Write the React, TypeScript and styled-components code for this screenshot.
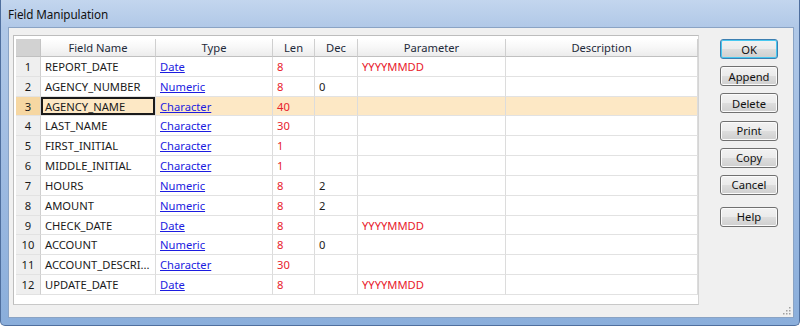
import React from "react";
import styled, { createGlobalStyle, css } from "styled-components";

const GlobalStyle = createGlobalStyle`
  html, body { margin: 0; padding: 0; width: 800px; height: 326px; overflow: hidden; background: #ffffff; }
  body { font-family: "Noto Sans", "Open Sans", "DejaVu Sans", sans-serif; }
  #root { width: 800px; height: 326px; }
`;

const Window = styled.div`
  box-sizing: border-box;
  width: 800px;
  height: 326px;
  display: flex;
  flex-direction: column;
  background: linear-gradient(180deg, #c3d6ee 0px, #b0c8e7 28px, #9ab8e0 200px, #8aaedb 100%);
  border: 1px solid #4f6f9e;
  border-top: none;
  border-radius: 0 0 5px 5px;
`;

const TitleBar = styled.div`
  height: 27px;
  display: flex;
  align-items: center;
  padding-left: 7px;
  font-size: 11.7px;
  color: #111;
  letter-spacing: -0.1px;
`;

const Frame = styled.div`
  flex: 1;
  display: flex;
  padding: 0 7px 7px 7px;
  min-height: 0;
`;

const Client = styled.div`
  position: relative;
  flex: 1;
  display: flex;
  align-items: flex-start;
  background: #f0f0f0;
  border: 1px solid #8aa3c4;
  padding: 7px 15px 0 4px;
  gap: 21px;
`;

const GridPanel = styled.div`
  width: 686px;
  height: 270px;
  background: #ffffff;
  border: 1px solid #bdbdbd;
  border-right-color: #d4d4d4;
  border-bottom-color: #c8c8c8;
  padding: 3px 1px 0 2px;
  box-sizing: border-box;
  display: flex;
  flex-direction: column;
`;

const Grid = styled.div`
  display: grid;
  grid-template-columns: 25px 115px 117px 42px 43px 148px 192px;
`;

const HeadCell = styled.div<{ $corner?: boolean }>`
  height: 18px;
  box-sizing: border-box;
  display: flex;
  align-items: center;
  justify-content: center;
  font-size: 11.2px;
  color: #1e2a3a;
  border-right: 1px solid #cfcfcf;
  border-bottom: 1px solid #c0c0c0;
  background: linear-gradient(180deg, #ffffff 0%, #f7f7f7 50%, #ececec 100%);
  ${(p) =>
    p.$corner &&
    css`
      background: #d2d2d2;
      border-right-color: #c4c4c4;
    `}
`;

const Cell = styled.div<{ $tone?: "red"; $selected?: boolean; $focus?: boolean; $rowHead?: boolean }>`
  height: calc(238px / 12);
  box-sizing: border-box;
  display: flex;
  align-items: center;
  padding-left: 4px;
  font-size: 11.2px;
  color: #1a1a1a;
  white-space: nowrap;
  overflow: hidden;
  border-right: 1px solid #dcdcdc;
  border-bottom: 1px solid #e2e2e2;
  background: ${(p) => (p.$selected ? "#fde8c5" : "#ffffff")};
  ${(p) =>
    p.$tone === "red" &&
    css`
      color: #e8202c;
    `}
  ${(p) =>
    p.$rowHead &&
    css`
      justify-content: center;
      padding-left: 0;
      background: ${p.$selected ? "#f6d7a2" : "#efefef"};
      border-right-color: #cfcfcf;
      color: #1a1a1a;
    `}
  ${(p) =>
    p.$focus &&
    css`
      box-shadow: inset 0 0 0 2px #1a1a1a;
    `}
`;

const Link = styled.span`
  color: #1c1ce0;
  text-decoration: underline;
  text-underline-offset: 1px;
`;

const ButtonColumn = styled.div`
  display: flex;
  flex-direction: column;
  gap: 7.2px;
  padding-top: 4px;
`;

const Button = styled.button<{ $default?: boolean; $spaced?: boolean }>`
  width: 58px;
  height: 20px;
  box-sizing: border-box;
  font-family: "Noto Sans", "Open Sans", sans-serif;
  font-size: 11.2px;
  color: #111;
  padding: 0;
  border: 1px solid #707070;
  border-radius: 3px;
  background: linear-gradient(180deg, #f2f2f2 0%, #ebebeb 48%, #dddddd 52%, #cfcfcf 100%);
  box-shadow: inset 0 0 0 1px #fbfbfb;
  ${(p) =>
    p.$default &&
    css`
      border-color: #3c7fb1;
      box-shadow: inset 0 0 0 1px #48c8f0;
    `}
  ${(p) =>
    p.$spaced &&
    css`
      margin-top: 4.5px;
    `}
`;

const Grip = styled.svg`
  position: absolute;
  right: 2px;
  bottom: 2px;
`;

type Row = { name: string; type: string; len: string; dec: string; param: string };

const rows: Row[] = [
  { name: "REPORT_DATE", type: "Date", len: "8", dec: "", param: "YYYYMMDD" },
  { name: "AGENCY_NUMBER", type: "Numeric", len: "8", dec: "0", param: "" },
  { name: "AGENCY_NAME", type: "Character", len: "40", dec: "", param: "" },
  { name: "LAST_NAME", type: "Character", len: "30", dec: "", param: "" },
  { name: "FIRST_INITIAL", type: "Character", len: "1", dec: "", param: "" },
  { name: "MIDDLE_INITIAL", type: "Character", len: "1", dec: "", param: "" },
  { name: "HOURS", type: "Numeric", len: "8", dec: "2", param: "" },
  { name: "AMOUNT", type: "Numeric", len: "8", dec: "2", param: "" },
  { name: "CHECK_DATE", type: "Date", len: "8", dec: "", param: "YYYYMMDD" },
  { name: "ACCOUNT", type: "Numeric", len: "8", dec: "0", param: "" },
  { name: "ACCOUNT_DESCRI...", type: "Character", len: "30", dec: "", param: "" },
  { name: "UPDATE_DATE", type: "Date", len: "8", dec: "", param: "YYYYMMDD" },
];

const headers = ["Field Name", "Type", "Len", "Dec", "Parameter", "Description"];

export default function App() {
  return (
    <>
      <GlobalStyle />
      <Window>
        <TitleBar>Field Manipulation</TitleBar>
        <Frame>
          <Client>
            <GridPanel>
              <Grid>
                <HeadCell $corner />
                {headers.map((h) => (
                  <HeadCell key={h}>{h}</HeadCell>
                ))}
                {rows.map((r, i) => {
                  const sel = i === 2;
                  return (
                    <React.Fragment key={i}>
                      <Cell $rowHead $selected={sel}>{i + 1}</Cell>
                      <Cell $selected={sel} $focus={sel}>{r.name}</Cell>
                      <Cell $selected={sel}>
                        <Link>{r.type}</Link>
                      </Cell>
                      <Cell $selected={sel} $tone="red">{r.len}</Cell>
                      <Cell $selected={sel}>{r.dec}</Cell>
                      <Cell $selected={sel} $tone="red">{r.param}</Cell>
                      <Cell $selected={sel} />
                    </React.Fragment>
                  );
                })}
              </Grid>
            </GridPanel>
            <ButtonColumn>
              <Button $default>OK</Button>
              <Button>Append</Button>
              <Button>Delete</Button>
              <Button>Print</Button>
              <Button>Copy</Button>
              <Button>Cancel</Button>
              <Button $spaced>Help</Button>
            </ButtonColumn>
            <Grip width="10" height="10" viewBox="0 0 10 10">
              {[
                [8, 2],
                [8, 5],
                [5, 5],
                [8, 8],
                [5, 8],
                [2, 8],
              ].map(([x, y], k) => (
                <rect key={k} x={x} y={y} width="1.5" height="1.5" fill="#a0a0a0" />
              ))}
            </Grip>
          </Client>
        </Frame>
      </Window>
    </>
  );
}
